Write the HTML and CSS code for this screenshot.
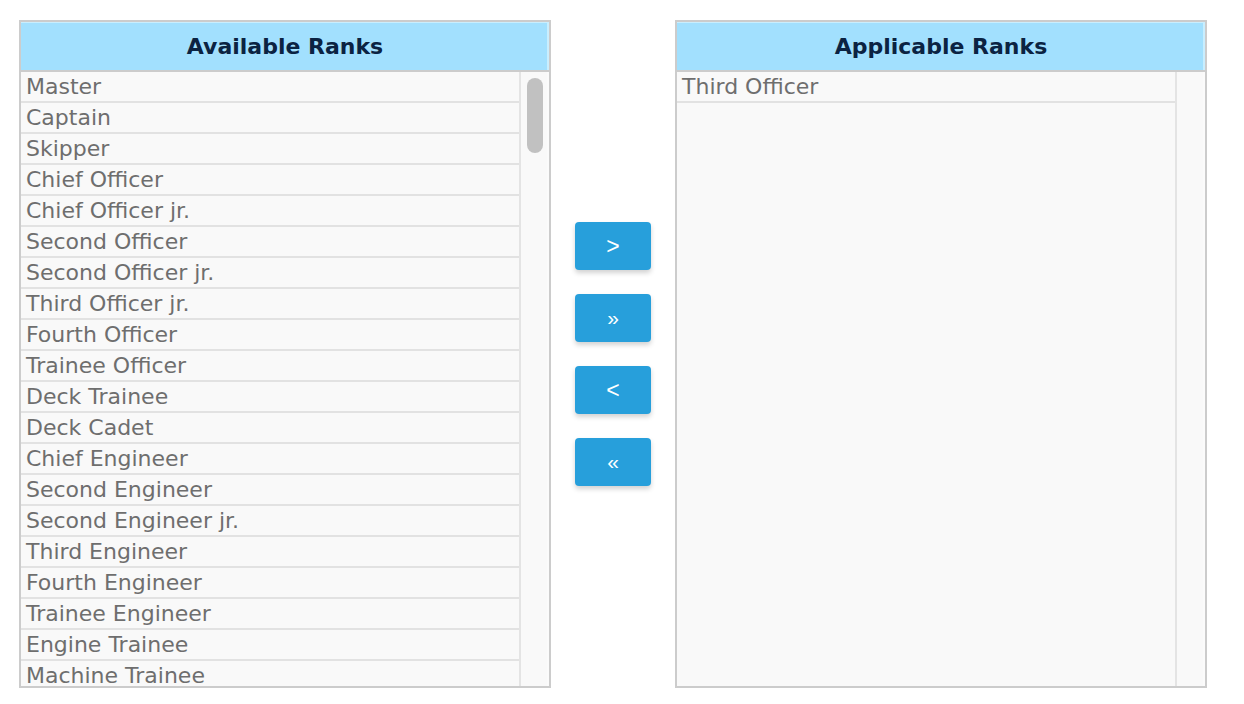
FILE: index.html
```html
<!DOCTYPE html>
<html lang="en">
<head>
  <meta charset="UTF-8">
  <meta name="viewport" content="width=device-width, initial-scale=1.0">
  <title>Ranks</title>
  <link rel="stylesheet" href="styles.css">
</head>
<body>
  <div class="picker">
    <!-- Left list -->
    <div class="panel">
      <div class="panel-header">Available Ranks</div>
      <div class="panel-body">
        <div id="availableList" class="rank-list"></div>
        <div class="scroll-track"><div class="scroll-thumb" id="availableThumb"></div></div>
      </div>
    </div>

    <!-- Transfer buttons -->
    <div class="actions">
      <button class="move-btn" id="addOne">&gt;</button>
      <button class="move-btn small" id="addAll">&raquo;</button>
      <button class="move-btn" id="removeOne">&lt;</button>
      <button class="move-btn small" id="removeAll">&laquo;</button>
    </div>

    <!-- Right list -->
    <div class="panel">
      <div class="panel-header">Applicable Ranks</div>
      <div class="panel-body">
        <div id="applicableList" class="rank-list"></div>
        <div class="scroll-track"><div class="scroll-thumb" id="applicableThumb"></div></div>
      </div>
    </div>
  </div>

  <script>
    let available = [
      'Master', 'Captain', 'Skipper', 'Chief Officer', 'Chief Officer jr.',
      'Second Officer', 'Second Officer jr.', 'Third Officer jr.', 'Fourth Officer',
      'Trainee Officer', 'Deck Trainee', 'Deck Cadet', 'Chief Engineer',
      'Second Engineer', 'Second Engineer jr.', 'Third Engineer', 'Fourth Engineer',
      'Trainee Engineer', 'Engine Trainee', 'Machine Trainee',
      'Bosun', 'Able Seaman', 'Ordinary Seaman', 'Deck Fitter', 'Pumpman',
      'Crane Operator', 'Carpenter', 'Quartermaster', 'Deck Rating', 'Deck Boy',
      'Electrical Officer', 'Electro Technical Officer', 'Electrician',
      'Second Electrician', 'Electrical Cadet', 'Fitter', 'Oiler', 'Wiper',
      'Motorman', 'Engine Rating', 'Reefer Engineer', 'Gas Engineer',
      'Cargo Engineer', 'Staff Chief Engineer', 'Staff Captain', 'Safety Officer',
      'Security Officer', 'Radio Officer', 'Purser', 'Chief Cook', 'Cook',
      'Second Cook', 'Messman', 'Chief Steward', 'Steward', 'Galley Boy',
      'Laundryman', 'Doctor', 'Nurse', 'Hotel Manager', 'DP Operator',
      'Barge Master', 'Rigger', 'Roustabout', 'Welder', 'Tug Master',
      'Mooring Master', 'Superintendent', 'Supernumerary', 'Junior Engineer',
      'Junior Officer', 'Engine Cadet', 'Apprentice Fitter', 'Chief Mate',
      'Second Mate', 'Third Mate', 'Fourth Mate', 'Fifth Engineer', 'Sixth Engineer',
      'Chief Electrician', 'Electrician jr.', 'Fitter jr.', 'Oiler jr.', 'Bosun jr.',
      'Able Seaman jr.', 'Cook jr.', 'Steward jr.', 'Cargo Officer',
      'Cargo Superintendent', 'Ballast Control Operator', 'Crane Operator jr.',
      'Storekeeper', 'Painter', 'Plumber', 'Refrigeration Engineer',
      'Environmental Officer', 'Medical Officer', 'Training Officer',
      'Hospital Steward', 'Cabin Steward', 'Waiter', 'Barman', 'Housekeeper',
      'Laundry Master', 'Baker', 'Butcher', 'Pastry Cook', 'Night Cleaner',
      'Utility', 'Deckhand', 'Boatswain Mate', 'Lamp Trimmer', 'Winchman',
      'Mechanic', 'Hydraulic Technician', 'Instrument Technician',
      'Subsea Engineer', 'ROV Pilot', 'ROV Supervisor', 'Dive Supervisor', 'Diver',
      'Surveyor', 'Data Processor', 'Client Representative',
      "Owner's Representative", 'Port Captain', 'Marine Superintendent',
      'Technical Superintendent', 'Relief Master', 'Relief Chief Engineer',
      'Observer', 'Pilot', 'Tank Cleaner', 'Riding Crew', 'Riding Fitter',
      'Riding Electrician', 'Trainee Electrician', 'Trainee Cook',
      'Trainee Steward', 'Trainee Fitter'
    ];
    let applicable = ['Third Officer'];
    let selected = null;

    // Size and place the fake scrollbar thumb from the list's scroll state
    function updateThumb(list, thumb) {
      const viewH = list.clientHeight;
      const fullH = list.scrollHeight;
      if (fullH <= viewH) {
        thumb.style.display = 'none';
        return;
      }
      const height = Math.max(30, Math.round(viewH * viewH / fullH) - 12);
      const room = viewH - 12 - height;
      const top = 6 + Math.round(room * list.scrollTop / (fullH - viewH));
      thumb.style.display = 'block';
      thumb.style.height = height + 'px';
      thumb.style.marginTop = top + 'px';
    }

    // Draw one list of ranks
    function renderList(id, ranks) {
      const list = document.getElementById(id + 'List');
      const thumb = document.getElementById(id + 'Thumb');
      list.innerHTML = '';

      ranks.forEach(rank => {
        const row = document.createElement('div');
        row.classList.add('rank-row');
        if (rank === selected) row.classList.add('selected');
        row.textContent = rank;
        row.addEventListener('click', () => {
          selected = selected === rank ? null : rank;
          renderAll();
        });
        list.appendChild(row);
      });

      list.onscroll = () => updateThumb(list, thumb);
      updateThumb(list, thumb);
    }

    function renderAll() {
      renderList('available', available);
      renderList('applicable', applicable);
    }

    renderAll();

    document.getElementById('addOne').addEventListener('click', () => {
      if (!available.includes(selected)) return;
      available = available.filter(r => r !== selected);
      applicable.push(selected);
      renderAll();
    });

    document.getElementById('addAll').addEventListener('click', () => {
      applicable = applicable.concat(available);
      available = [];
      renderAll();
    });

    document.getElementById('removeOne').addEventListener('click', () => {
      if (!applicable.includes(selected)) return;
      applicable = applicable.filter(r => r !== selected);
      available.push(selected);
      renderAll();
    });

    document.getElementById('removeAll').addEventListener('click', () => {
      available = available.concat(applicable);
      applicable = [];
      renderAll();
    });
  </script>
</body>
</html>
```

FILE: styles.css
```css
* {
  margin: 0;
  padding: 0;
  box-sizing: border-box;
}

body {
  background-color: #ffffff;
  font-family: "DejaVu Sans", Verdana, sans-serif;
}

.picker {
  display: flex;
  align-items: center;
  padding: 20px 0 0 19px;
}

.panel {
  width: 532px;
  height: 668px;
  border: 2px solid #cccccc;
  display: flex;
  flex-direction: column;
  background-color: #f9f9f9;
}

.panel-header {
  height: 50px;
  padding-top: 2px;
  line-height: 46px;
  text-align: center;
  font-size: 22px;
  font-weight: bold;
  color: #0b2342;
  background-color: #a2e0fe;
  border-bottom: 2px solid #cccccc;
  box-shadow: inset 0 1px 0 #c9eefe, inset -2px 0 0 #c9eefe;
}

.panel-body {
  flex: 1;
  display: flex;
  min-height: 0;
}

.rank-list {
  flex: 1;
  overflow-y: auto;
  scrollbar-width: none;
  background-color: #f9f9f9;
}

.rank-list::-webkit-scrollbar {
  display: none;
}

.scroll-track {
  width: 30px;
  border-left: 2px solid #e4e4e4;
  border-right: 2px solid #fbfbfb;
  background-color: #f9f9f9;
}

.scroll-thumb {
  width: 16px;
  margin-left: 6px;
  border-radius: 8px;
  background-color: #c1c1c1;
}

.rank-row {
  height: 31px;
  line-height: 29px;
  padding-left: 5px;
  font-size: 22px;
  color: #6e6e6e;
  border-bottom: 2px solid #e2e2e2;
  white-space: nowrap;
  overflow: hidden;
  cursor: pointer;
}

.rank-row.selected {
  background-color: #dff3fd;
}

.actions {
  width: 124px;
  display: flex;
  flex-direction: column;
  align-items: center;
  gap: 24px;
}

.move-btn {
  width: 76px;
  height: 48px;
  border: none;
  border-radius: 4px;
  background-color: #279fdb;
  color: #ffffff;
  font-family: "Liberation Sans", Arial, sans-serif;
  font-size: 23px;
  box-shadow: 0 3px 5px rgba(0, 0, 0, 0.18);
  cursor: pointer;
}

.move-btn.small {
  font-size: 21px;
}
```
